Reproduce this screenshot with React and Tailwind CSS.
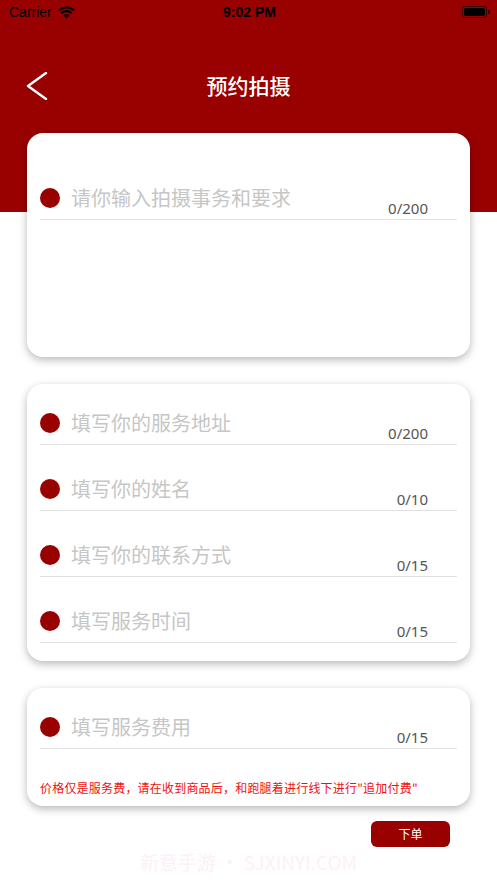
import { useState } from "react";

const FONT = { fontFamily: '"Noto Sans CJK SC", "Noto Sans", sans-serif' };

function StatusBar() {
  return (
    <div className="flex h-[24px] items-center justify-between pl-[9px] pr-[7px] text-black" style={{ fontFamily: '"Liberation Sans", Arial, sans-serif' }}>
      <div className="flex w-[120px] items-center gap-[6px]">
        <span className="text-[14px]">Carrier</span>
        <svg width="17" height="13" viewBox="0 0 17 13">
          <path d="M8.5 12.5 L5.6 9.4 A4.2 4.2 0 0 1 11.4 9.4 Z" fill="#000" />
          <path d="M3.4 7.2 A7.3 7.3 0 0 1 13.6 7.2" stroke="#000" strokeWidth="2.1" fill="none" />
          <path d="M1 4.6 A10.8 10.8 0 0 1 16 4.6" stroke="#000" strokeWidth="2.1" fill="none" />
        </svg>
      </div>
      <span className="text-[14px] font-bold">9:02 PM</span>
      <div className="flex w-[120px] justify-end">
        <div className="flex items-center">
          <div className="h-[12px] w-[25px] rounded-[3px] border border-[#3a0000] p-[1px]">
            <div className="h-full w-full rounded-[2px] bg-black" />
          </div>
          <div className="ml-[1px] h-[4px] w-[2px] rounded-r-[1px] bg-[#3a0000]" />
        </div>
      </div>
    </div>
  );
}

function Field({ placeholder, max }) {
  const [value, setValue] = useState("");
  return (
    <div className="flex items-stretch border-b border-[#e1e1e1]">
      <div className="flex h-[42px] flex-1 items-center gap-[11px]">
        <span className="h-[20px] w-[20px] shrink-0 rounded-full bg-[#990000]" />
        <input
          value={value}
          onChange={e => setValue(e.target.value.slice(0, max))}
          placeholder={placeholder}
          className="w-full bg-transparent text-[20px] text-[#333] outline-none placeholder:text-[#c6c6c6]"
          style={FONT}
        />
      </div>
      <span className="mb-[2px] mr-[29px] self-end text-[15px] leading-[18px] text-[#555]" style={{ fontFamily: '"Noto Sans", sans-serif' }}>
        {value.length}/{max}
      </span>
    </div>
  );
}

function Card({ className, children }) {
  return (
    <div className={`rounded-[16px] bg-white px-[13px] shadow-[0_3px_8px_rgba(0,0,0,0.28)] ${className}`}>
      {children}
    </div>
  );
}

export default function App() {
  return (
    <div className="min-h-[883px] w-full overflow-hidden bg-white" style={FONT}>
      <div className="h-[212px] bg-[#990000]">
        <StatusBar />
        <div className="relative mt-[40px] flex h-[44px] items-center justify-center">
          <button className="absolute left-[26px] top-[8px]">
            <svg width="22" height="28" viewBox="0 0 22 28">
              <path d="M20 1 L2 14 L20 27" stroke="#fff" strokeWidth="2.4" fill="none" strokeLinecap="round" strokeLinejoin="round" />
            </svg>
          </button>
          <h1 className="text-[21px] font-medium text-white">预约拍摄</h1>
        </div>
      </div>

      <div className="-mt-[79px] flex flex-col gap-[27px] px-[27px]">
        <Card className="h-[224px] pt-[44px]">
          <Field placeholder="请你输入拍摄事务和要求" max={200} />
        </Card>

        <Card className="flex flex-col gap-[23px] pb-[18px] pt-[18px]">
          <Field placeholder="填写你的服务地址" max={200} />
          <Field placeholder="填写你的姓名" max={10} />
          <Field placeholder="填写你的联系方式" max={15} />
          <Field placeholder="填写服务时间" max={15} />
        </Card>

        <Card className="pb-[11px] pt-[18px]">
          <Field placeholder="填写服务费用" max={15} />
          <p className="mt-[32px] text-[12px] leading-[14px] tracking-[0.2px] text-[#f01010]">
            价格仅是服务费，请在收到商品后，和跑腿着进行线下进行"追加付费"
          </p>
        </Card>
      </div>

      <div className="mt-[15px] flex justify-end pr-[47px]">
        <button className="h-[26px] w-[79px] rounded-[6px] bg-[#990000] text-[12px] text-white">下单</button>
      </div>

      <div className="mt-[3px] text-center text-[19px] leading-[24px] text-[#fdf0f8]" style={{ fontFamily: '"Noto Sans CJK SC", "Liberation Sans", sans-serif' }}>
        新意手游 • SJXINYI.COM
      </div>
    </div>
  );
}
